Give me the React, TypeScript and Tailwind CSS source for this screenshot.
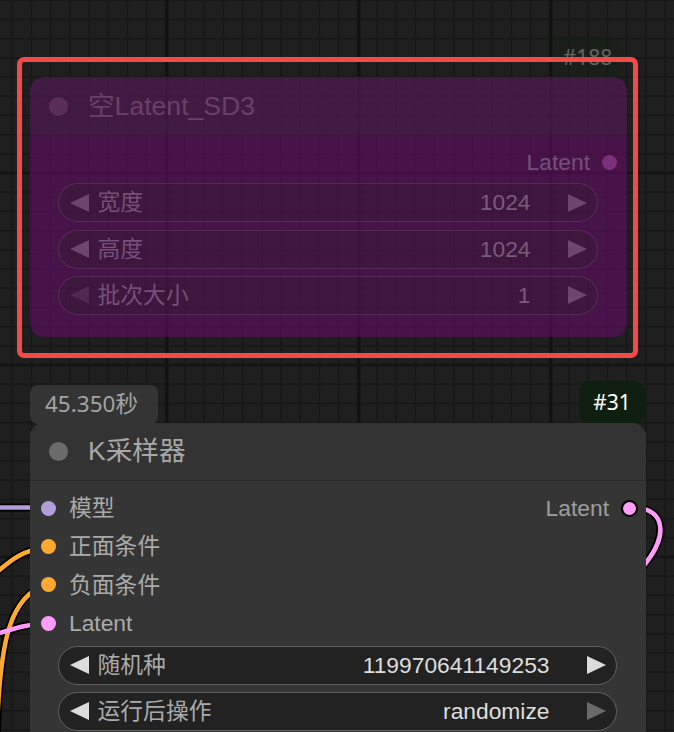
import React from "react";

const nodeFont = "font-['Liberation_Sans','Noto_Sans_CJK_SC',sans-serif]";
const badgeFont = "font-['Noto_Sans','Noto_Sans_CJK_SC',sans-serif]";

function ArrowLeft({ className }: { className: string }) {
  return (
    <svg width="19" height="18" viewBox="0 0 19 18" className={className}>
      <polygon points="0,9 19,0 19,18" fill="currentColor" />
    </svg>
  );
}

function ArrowRight({ className }: { className: string }) {
  return (
    <svg width="19" height="18" viewBox="0 0 19 18" className={className}>
      <polygon points="0,0 19,9 0,18" fill="currentColor" />
    </svg>
  );
}

type Tone = "dark" | "purple";

function Widget({
  label,
  value,
  tone,
  leftDim = false,
  rightDim = false,
}: {
  label: string;
  value: string;
  tone: Tone;
  leftDim?: boolean;
  rightDim?: boolean;
}) {
  const dark = tone === "dark";
  return (
    <div
      className={
        dark
          ? "flex h-[39px] items-center rounded-full border-[1.5px] border-[#606060] bg-[#222222] pl-[10.5px] pr-[10.5px]"
          : "flex h-[39px] items-center rounded-full border-[1.5px] border-[rgba(130,90,130,0.32)] bg-[rgba(40,30,40,0.3)] pl-[10.5px] pr-[10.5px]"
      }
    >
      <ArrowLeft
        className={
          dark
            ? leftDim
              ? "shrink-0 text-[#6a6a6a]"
              : "shrink-0 text-[#dcdcdc]"
            : leftDim
            ? "shrink-0 text-[#52284f]"
            : "shrink-0 text-[#6d466b]"
        }
      />
      <span
        className={
          dark
            ? "ml-[9px] text-[22.8px] leading-none text-[#ababab]"
            : "ml-[9px] text-[22.8px] leading-none text-[#74507a]"
        }
      >
        {label}
      </span>
      <span
        className={
          dark
            ? "ml-auto mr-[37px] text-[22.8px] leading-none text-[#dedede]"
            : "ml-auto mr-[37px] text-[22.8px] leading-none text-[#7a5a7a]"
        }
      >
        {value}
      </span>
      <ArrowRight
        className={
          dark
            ? rightDim
              ? "shrink-0 text-[#6a6a6a]"
              : "shrink-0 text-[#dcdcdc]"
            : rightDim
            ? "shrink-0 text-[#52284f]"
            : "shrink-0 text-[#6d466b]"
        }
      />
    </div>
  );
}

function InputSlot({ label, color }: { label: string; color: string }) {
  return (
    <div className="flex items-center pl-[11px]">
      <span className={`h-[15px] w-[15px] shrink-0 rounded-full ${color}`} />
      <span className="ml-[13px] text-[22.8px] leading-none text-[#aaaaaa]">{label}</span>
    </div>
  );
}

function Canvas() {
  return (
    <svg className="absolute inset-0" width="674" height="732" viewBox="0 0 674 732">
      <defs>
        <pattern id="gridSmall" width="19.2" height="19.2" patternUnits="userSpaceOnUse" x="11.3" y="18.5">
          <rect width="19.2" height="19.2" fill="#1f1f1f" />
          <rect x="0" y="0" width="2" height="19.2" fill="#181818" />
          <rect x="0" y="0" width="19.2" height="2" fill="#181818" />
        </pattern>
        <pattern id="gridBig" width="192" height="192" patternUnits="userSpaceOnUse" x="165" y="171.5">
          <rect x="0" y="0" width="3.5" height="192" fill="#121212" />
          <rect x="0" y="0" width="192" height="3" fill="#141414" />
        </pattern>
      </defs>
      <rect width="674" height="732" fill="url(#gridSmall)" />
      <rect width="674" height="732" fill="url(#gridBig)" />

      <g fill="none" strokeLinecap="round">
        <path d="M -10 507.5 L 48 507.5" stroke="#000" strokeWidth="8" />
        <path d="M -10 578 C 5 566, 18 550, 48 547" stroke="#000" strokeWidth="8" />
        <path d="M -3 730 C 0 640, 10 595, 48 584" stroke="#000" strokeWidth="8" />
        <path d="M -10 636 C 10 630, 25 624, 48 623" stroke="#000" strokeWidth="8" />
        <path d="M 629 508 C 662 505, 674 532, 640 570" stroke="#000" strokeWidth="8" />

        <path d="M -10 507.5 L 48 507.5" stroke="#b39ddb" strokeWidth="4.5" />
        <path d="M -10 578 C 5 566, 18 550, 48 547" stroke="#ffa931" strokeWidth="4.5" />
        <path d="M -3 730 C 0 640, 10 595, 48 584" stroke="#ffa931" strokeWidth="4.5" />
        <path d="M -10 636 C 10 630, 25 624, 48 623" stroke="#ff9cf9" strokeWidth="4.5" />
        <path d="M 629 508 C 662 505, 674 532, 640 570" stroke="#ff9cf9" strokeWidth="4.5" />
      </g>
    </svg>
  );
}

export default function App() {
  return (
    <div className={`relative h-[732px] w-[674px] overflow-hidden bg-[#1f1f1f] ${nodeFont}`}>
      <Canvas />

      {/* #188 id badge (dimmed, bypassed node) */}
      <div
        className={`absolute left-[553px] top-[36px] flex h-[42px] w-[69px] items-center justify-center rounded-[10px] bg-[#112211] opacity-30 ${badgeFont}`}
      >
        <span className="text-[21px] leading-none text-white">#188</span>
      </div>

      {/* Empty Latent SD3 node (bypassed, purple) */}
      <div className="absolute left-[30px] top-[77px] flex h-[260px] w-[597px] flex-col overflow-hidden rounded-[14px] bg-[#71077180]">
        <div className="flex h-[58px] shrink-0 items-center bg-[rgba(50,45,50,0.3)] pl-[19px]">
          <span className="h-[19px] w-[19px] shrink-0 rounded-full bg-[#5b2e5a]" />
          <span className="ml-[20px] text-[26.6px] leading-none text-[#6a3f68]">空Latent_SD3</span>
        </div>
        <div className="flex flex-col pt-[8px]">
          <div className="flex h-[38.4px] items-center justify-end pr-[10px]">
            <span className="text-[22.8px] leading-none text-[#74507a]">Latent</span>
            <span className="ml-[12px] h-[15px] w-[15px] rounded-full bg-[#7b307b]" />
          </div>
        </div>
        <div className="mt-[2px] flex flex-col gap-[7.3px] pl-[28px] pr-[29px]">
          <Widget tone="purple" label="宽度" value="1024" />
          <Widget tone="purple" label="高度" value="1024" />
          <Widget tone="purple" label="批次大小" value="1" leftDim />
        </div>
      </div>

      {/* selection highlight */}
      <div className="absolute left-[17px] top-[57px] h-[301px] w-[621px] rounded-[7px] border-[5px] border-[#f24a49]" />

      {/* execution time badge */}
      <div
        className={`absolute left-[30px] top-[385px] flex h-[39px] w-[128px] items-center rounded-[8px] bg-[#343434] pl-[15px] ${badgeFont}`}
      >
        <span className="text-[22.5px] leading-none text-[#a3a3a3]">45.350秒</span>
      </div>

      {/* #31 id badge */}
      <div
        className={`absolute left-[579px] top-[381px] flex h-[42px] w-[66px] items-center justify-center rounded-[10px] bg-[#0f1f0f] ${badgeFont}`}
      >
        <span className="text-[21px] leading-none text-white">#31</span>
      </div>

      {/* KSampler node */}
      <div className="absolute left-[30px] top-[423px] flex h-[360px] w-[616px] flex-col rounded-t-[14px] bg-[#353535]">
        <div className="flex h-[58px] shrink-0 items-center rounded-t-[14px] border-b border-[#2a2a2a] bg-[#333333] pl-[19px]">
          <span className="h-[19px] w-[19px] shrink-0 rounded-full bg-[#6b6b6b]" />
          <span className="ml-[20px] text-[26.6px] leading-none text-[#a8a8a8]">K采样器</span>
        </div>
        <div className="flex flex-col pt-[8px]">
          <div className="flex h-[38.4px] items-center justify-between">
            <InputSlot label="模型" color="bg-[#b39ddb]" />
            <div className="flex items-center pr-[8.5px]">
              <span className="text-[22.8px] leading-none text-[#9d9d9d]">Latent</span>
              <span className="ml-[11.5px] h-[17px] w-[17px] rounded-full border-2 border-black bg-[#ff9cf9]" />
            </div>
          </div>
          <div className="flex h-[38.4px] items-center">
            <InputSlot label="正面条件" color="bg-[#ffa931]" />
          </div>
          <div className="flex h-[38.4px] items-center">
            <InputSlot label="负面条件" color="bg-[#ffa931]" />
          </div>
          <div className="flex h-[38.4px] items-center">
            <InputSlot label="Latent" color="bg-[#ff9cf9]" />
          </div>
        </div>
        <div className="mt-[3px] flex flex-col gap-[7.3px] pl-[28px] pr-[29px]">
          <Widget tone="dark" label="随机种" value="119970641149253" />
          <Widget tone="dark" label="运行后操作" value="randomize" rightDim />
        </div>
      </div>
    </div>
  );
}
